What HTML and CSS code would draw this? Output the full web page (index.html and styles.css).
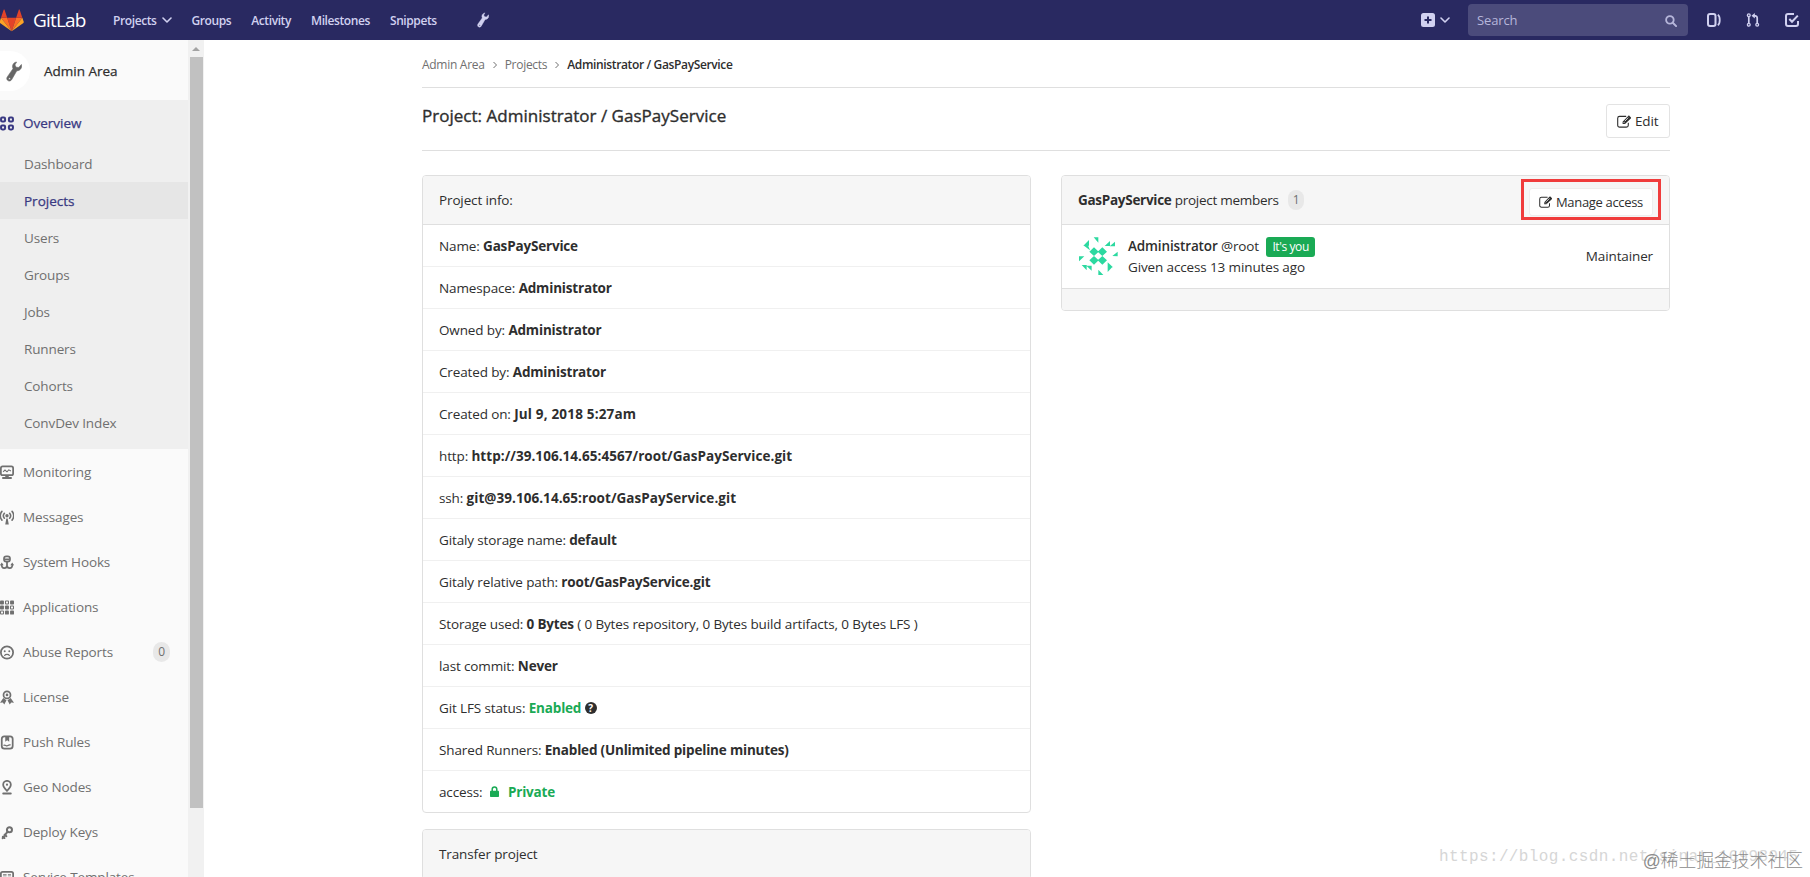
FILE: index.html
```html
<!DOCTYPE html>
<html lang="en">
<head>
    <meta charset="UTF-8">
    <meta name="viewport" content="width=device-width, initial-scale=1.0">
    <title>Administrator / GasPayService · Projects · GitLab</title>
    <link rel="stylesheet" href="styles.css">
</head>
<body>
    <!-- Icon sprite -->
    <svg class="sprite">
        <symbol id="chevron" viewBox="0 0 10 10"><path d="M1 3l4 4 4-4" fill="none" stroke="currentColor" stroke-width="1.6" stroke-linecap="round" stroke-linejoin="round"/></symbol>
        <symbol id="angle" viewBox="0 0 6 8"><path d="M1.5 1l3 3-3 3" fill="none" stroke="currentColor" stroke-width="1"/></symbol>
        <symbol id="wrench" viewBox="0 0 16 20"><path d="M10.6.5 8.900 3.400l1.300 2.400 2.600.1L15.400 3c.9 3.400-1.200 6.400-4.600 6.300L5.600 18.200c-.9 1.500-2.600 1.600-3.700.9-1.200-.8-1.500-2.400-.6-3.700L7 7.200C5.600 4.200 7.200 1 10.600.5zM3.500 16.200a.9.9 0 1 0 .1 1.800.9.9 0 0 0-.1-1.800z" fill="currentColor" fill-rule="evenodd" stroke="currentColor" stroke-width=".6"/></symbol>
        <symbol id="edit" viewBox="0 0 15 13"><path d="M11.300 7.800v2.400c0 1.100-.8 1.900-1.900 1.900H2.600C1.500 12.100.7 11.300.7 10.200V3.300c0-1.100.8-1.900 1.900-1.900h6.600" fill="none" stroke="currentColor" stroke-width="1.100"/><path d="M5.600 9V6.700l5.600-5.800c.4-.4.9-.4 1.300 0l1.300 1.300c.4.4.4.9 0 1.300L8 9z" fill="currentColor"/><path d="M6.500 7l1.100 1.100M7.800 6.200l3.400-3.500" stroke="#fff" stroke-width=".8"/></symbol>
        <symbol id="overview" viewBox="0 0 16 16"><g fill="none" stroke="currentColor" stroke-width="2.300"><rect x="1.200" y="1.200" width="4.600" height="4.600" rx="1.300"/><rect x="10.200" y="1.200" width="4.600" height="4.600" rx="1.300"/><rect x="1.200" y="10.200" width="4.600" height="4.600" rx="1.300"/><rect x="10.200" y="10.200" width="4.600" height="4.600" rx="1.300"/></g></symbol>
        <symbol id="monitor" viewBox="0 0 16 16"><rect x="1" y="1" width="14" height="10" rx="2" fill="none" stroke="currentColor" stroke-width="2"/><path d="M3.500 7.200l2.200-2 2.300 2 2-2.200 2.500 1.200" fill="none" stroke="currentColor" stroke-width="1.200"/><path d="M6 11h4v2h2.500a1 1 0 0 1 0 2.500h-9a1 1 0 0 1 0-2.500H6z" fill="currentColor"/></symbol>
        <symbol id="messages" viewBox="0 0 16 16"><circle cx="8" cy="6" r="1.900" fill="currentColor"/><path d="M7.200 9h1.600l1.200 7H6z" fill="currentColor"/><path d="M5 3.200a4.300 4.300 0 0 0 0 5.600M11 3.200a4.300 4.300 0 0 1 0 5.600M2.200 1a7.500 7.500 0 0 0 0 10M13.800 1a7.500 7.500 0 0 1 0 10" fill="none" stroke="currentColor" stroke-width="1.800" stroke-linecap="round"/></symbol>
        <symbol id="hook" viewBox="0 0 16 16"><rect x="4.600" y="1" width="6.800" height="6" rx="2.500" fill="none" stroke="currentColor" stroke-width="2"/><path d="M5 4.500h6M8 7v7.500M1.800 10c0 3.200 1.300 4.500 3 4.500S8 13.400 8 11.500c0 1.900 1.500 3 3.200 3s3-1.300 3-4.500" fill="none" stroke="currentColor" stroke-width="2"/><path d="M0 11l2-3 2.200 3zM11.800 11L14 8l2 3z" fill="currentColor"/></symbol>
        <symbol id="apps" viewBox="0 0 16 16"><g fill="currentColor"><rect x="0" y="0" width="4.500" height="4.500" rx="1"/><rect x="11.500" y="0" width="4.500" height="4.500" rx="1"/><rect x="0" y="5.700" width="4.500" height="4.500" rx="1"/><rect x="5.700" y="5.700" width="4.500" height="4.500" rx="1"/><rect x="5.700" y="11.500" width="4.500" height="4.500" rx="1"/><rect x="11.500" y="11.500" width="4.500" height="4.500" rx="1"/></g><g fill="none" stroke="currentColor" stroke-width="1.200"><rect x="6.300" y=".6" width="3.400" height="3.400" rx=".5"/><rect x="12" y="6.300" width="3.400" height="3.400" rx=".5"/><rect x=".6" y="12" width="3.400" height="3.400" rx=".5"/></g></symbol>
        <symbol id="abuse" viewBox="0 0 16 16"><circle cx="8" cy="8" r="7" fill="none" stroke="currentColor" stroke-width="2"/><circle cx="5.400" cy="6.500" r="1.100" fill="currentColor"/><circle cx="10.600" cy="6.500" r="1.100" fill="currentColor"/><path d="M5.300 11.300c.8-1.700 4.600-1.700 5.400 0" fill="none" stroke="currentColor" stroke-width="1.400" stroke-linecap="round"/></symbol>
        <symbol id="license" viewBox="0 0 16 16"><circle cx="8" cy="5" r="4" fill="none" stroke="currentColor" stroke-width="2"/><circle cx="8" cy="5" r="1.500" fill="currentColor"/><path d="M3.800 8.500l3.600 2.500-2.500 5-1.700-2.300-3.200.3zM12.200 8.500L8.600 11l2.500 5 1.700-2.300 3.200.3z" fill="currentColor"/></symbol>
        <symbol id="push" viewBox="0 0 16 16"><rect x="2" y="1" width="12.500" height="14" rx="3" fill="none" stroke="currentColor" stroke-width="2"/><path d="M6 1v6l2.200-1.700L10.500 7V1z" fill="currentColor"/><path d="M4 11.500c2-2 3 1.500 5 0s2-1 3-.5" fill="none" stroke="currentColor" stroke-width="1.500"/></symbol>
        <symbol id="geo" viewBox="0 0 16 18"><path d="M8 13C4.500 9.500 3.400 8 3.400 5.600a4.600 4.600 0 0 1 9.200 0C12.600 8 11.500 9.500 8 13z" fill="none" stroke="currentColor" stroke-width="2.100"/><circle cx="8" cy="5.600" r="1.300" fill="currentColor"/><path d="M3.500 16.300h9" stroke="currentColor" stroke-width="2.400" stroke-linecap="round"/></symbol>
        <symbol id="key" viewBox="0 0 16 16"><circle cx="10.800" cy="4.800" r="2.900" fill="none" stroke="currentColor" stroke-width="2.300"/><path d="M8.700 7L3 14.500M5.300 10.500l2 1.700M3.300 12.800l1.800 1.500" fill="none" stroke="currentColor" stroke-width="2.300" stroke-linecap="round"/></symbol>
        <symbol id="template" viewBox="0 0 16 16"><rect x="1" y="1.500" width="14" height="13" rx="2" fill="none" stroke="currentColor" stroke-width="2"/><path d="M3.500 5h4M3.500 8h4M9 5h3.500M9 8h3.500" stroke="currentColor" stroke-width="1.600"/></symbol>
    </svg>

    <header class="navbar">
        <a class="brand">
            <svg class="tanuki" viewBox="0 0 36 34">
                <path d="M17.500 33L24.200 13H10.800z" fill="#e24329"/>
                <path d="M17.500 33L10.800 13H1.500z" fill="#fc6d26"/>
                <path d="M1.500 13L-.6 19c-.2.600 0 1.200.5 1.600L17.500 33z" fill="#fca326"/>
                <path d="M1.500 13h9.300L6.800 1c-.2-.6-1.100-.6-1.300 0z" fill="#e24329"/>
                <path d="M17.500 33L24.200 13h9.300z" fill="#fc6d26"/>
                <path d="M33.500 13l2.100 6c.2.600 0 1.200-.5 1.600L17.500 33z" fill="#fca326"/>
                <path d="M33.500 13h-9.300l4-12c.2-.6 1.100-.6 1.300 0z" fill="#e24329"/>
            </svg>
            <span class="brand-name">GitLab</span>
        </a>
        <nav class="nav-links">
            <a>Projects <svg class="chevron"><use href="#chevron"/></svg></a>
            <a>Groups</a>
            <a>Activity</a>
            <a>Milestones</a>
            <a>Snippets</a>
            <a class="nav-wrench"><svg><use href="#wrench"/></svg></a>
        </nav>
        <div class="nav-right">
            <a class="new-item">
                <svg class="icon-plus" viewBox="0 0 14 14"><rect width="14" height="14" rx="2.500" fill="currentColor"/><path d="M7 3.500v7M3.500 7h7" stroke="#292961" stroke-width="2"/></svg>
                <svg class="chevron"><use href="#chevron"/></svg>
            </a>
            <div class="search">
                <span>Search</span>
                <svg viewBox="0 0 12 12"><circle cx="4.900" cy="4.900" r="3.800" fill="none" stroke="currentColor" stroke-width="1.800"/><path d="M7.800 7.800l3.300 3.300" stroke="currentColor" stroke-width="2" stroke-linecap="round"/></svg>
            </div>
            <svg class="nav-icon" viewBox="0 0 14 14"><rect x="1" y="1" width="7.500" height="12" rx="2" fill="none" stroke="currentColor" stroke-width="2"/><path d="M10.800 1.800c2.600 1.500 2.600 8.900 0 10.400" fill="none" stroke="currentColor" stroke-width="1.800"/></svg>
            <svg class="nav-icon" viewBox="0 0 14 14"><g fill="none" stroke="currentColor" stroke-width="1.300"><circle cx="2.800" cy="2.200" r="1.400"/><circle cx="2.800" cy="11.800" r="1.400"/><circle cx="11.200" cy="11.800" r="1.400"/></g><path d="M2.800 3.600v6.800M11.200 10.400V5c0-1.700-1-2.300-3.300-2.300" fill="none" stroke="currentColor" stroke-width="1.700"/><path d="M5.500 2.700L8.800 0v5.400z" fill="currentColor"/></svg>
            <svg class="nav-icon" viewBox="0 0 14 14"><path d="M9 1H3a2 2 0 0 0-2 2v8a2 2 0 0 0 2 2h8a2 2 0 0 0 2-2V8" fill="none" stroke="currentColor" stroke-width="2"/><path d="M4.300 6l2.700 2.800L12.800 2.600" fill="none" stroke="currentColor" stroke-width="2"/></svg>
        </div>
    </header>

    <div class="page">
        <aside class="sidebar">
            <div class="sidebar-menu">
                <div class="context-header">
                    <span class="context-avatar"><svg><use href="#wrench"/></svg></span>
                    <span>Admin Area</span>
                </div>
                <div class="section-open">
                    <a class="menu-item active"><svg><use href="#overview"/></svg>Overview</a>
                    <a class="sub-item">Dashboard</a>
                    <a class="sub-item active">Projects</a>
                    <a class="sub-item">Users</a>
                    <a class="sub-item">Groups</a>
                    <a class="sub-item">Jobs</a>
                    <a class="sub-item">Runners</a>
                    <a class="sub-item">Cohorts</a>
                    <a class="sub-item">ConvDev Index</a>
                </div>
                <a class="menu-item"><svg><use href="#monitor"/></svg>Monitoring</a>
                <a class="menu-item"><svg><use href="#messages"/></svg>Messages</a>
                <a class="menu-item"><svg><use href="#hook"/></svg>System Hooks</a>
                <a class="menu-item"><svg><use href="#apps"/></svg>Applications</a>
                <a class="menu-item"><svg><use href="#abuse"/></svg>Abuse Reports<span class="badge">0</span></a>
                <a class="menu-item"><svg><use href="#license"/></svg>License</a>
                <a class="menu-item"><svg><use href="#push"/></svg>Push Rules</a>
                <a class="menu-item"><svg><use href="#geo"/></svg>Geo Nodes</a>
                <a class="menu-item"><svg><use href="#key"/></svg>Deploy Keys</a>
                <a class="menu-item"><svg><use href="#template"/></svg>Service Templates</a>
            </div>
            <div class="scrollbar">
                <span class="scroll-arrow"></span>
                <span class="scroll-thumb"></span>
            </div>
        </aside>

        <main class="content">
            <div class="breadcrumbs">
                <a>Admin Area</a>
                <svg><use href="#angle"/></svg>
                <a>Projects</a>
                <svg><use href="#angle"/></svg>
                <strong>Administrator / GasPayService</strong>
            </div>
            <div class="page-title">
                <h3>Project: Administrator / GasPayService</h3>
                <a class="btn"><svg><use href="#edit"/></svg>Edit</a>
            </div>

            <div class="columns">
                <div class="column">
                    <div class="panel">
                        <div class="panel-heading">Project info:</div>
                        <ul class="info-list">
                            <li>Name: <strong>GasPayService</strong></li>
                            <li>Namespace: <strong>Administrator</strong></li>
                            <li>Owned by: <strong>Administrator</strong></li>
                            <li>Created by: <strong>Administrator</strong></li>
                            <li>Created on: <strong class="date">Jul 9, 2018 5:27am</strong></li>
                            <li>http: <strong class="url">http://39.106.14.65:4567/root/GasPayService.git</strong></li>
                            <li>ssh: <strong class="url">git@39.106.14.65:root/GasPayService.git</strong></li>
                            <li>Gitaly storage name: <strong>default</strong></li>
                            <li>Gitaly relative path: <strong>root/GasPayService.git</strong></li>
                            <li>Storage used: <strong>0 Bytes</strong> ( 0 Bytes repository, 0 Bytes build artifacts, 0 Bytes LFS )</li>
                            <li>last commit: <strong>Never</strong></li>
                            <li>Git LFS status: <strong class="green">Enabled</strong> <span class="help">?</span></li>
                            <li>Shared Runners: <strong>Enabled (Unlimited pipeline minutes)</strong></li>
                            <li>access: <svg class="lock" viewBox="0 0 9 11"><path d="M2.200 5V3.300a2.300 2.300 0 0 1 4.600 0V5" fill="none" stroke="currentColor" stroke-width="1.500"/><rect y="4.800" width="9" height="6.200" rx=".8" fill="currentColor"/></svg><strong class="green">Private</strong></li>
                        </ul>
                    </div>
                    <div class="panel">
                        <div class="panel-heading">Transfer project</div>
                    </div>
                </div>

                <div class="column">
                    <div class="panel">
                        <div class="panel-heading members-heading">
                            <strong>GasPayService</strong>&nbsp;project members
                            <span class="badge">1</span>
                            <a class="btn btn-sm"><svg><use href="#edit"/></svg>Manage access<span class="highlight"></span></a>
                        </div>
                        <div class="member">
                            <svg class="avatar" viewBox="23 20 120 120" fill="#2cd9a0">
                                <path d="M71 54l14 13-14 13-14-13zM96 54l14 13-14 13-14-13zM71 80l14 13-14 13-14-13zM96 80l14 13-14 13-14-13z"/>
                                <path d="M70 24h14v16zM56 32v17H39zM39 48h14l6 15zM119 35v15h-16zM134 37v14h-16zM142 67v14l-16-1zM26 81h16L26 96zM84 121l15 16H84zM34 107h15v16zM48 109h16v15zM112 99l16 15h-16zM112 113h14l-14 15z"/>
                            </svg>
                            <div class="member-info">
                                <div><b>Administrator</b> @root <span class="label">It's you</span></div>
                                <div>Given access 13 minutes ago</div>
                            </div>
                            <span class="role">Maintainer</span>
                        </div>
                        <div class="panel-footer"></div>
                    </div>
                </div>
            </div>
        </main>
    </div>

    <div class="watermark-url">https://blog.csdn.net/sinat_16998945</div>
    <div class="watermark">@稀土掘金技术社区</div>
</body>
</html>
```
FILE: styles.css
```css
* {
    box-sizing: border-box;
}
body {
    margin: 0;
    height: 877px;
    overflow: hidden;
    position: relative;
    background: #fff;
    color: #2e2e2e;
    font-family: "Open Sans", "Noto Sans", sans-serif;
    font-size: 13.5px;
    line-height: 21px;
    letter-spacing: -0.13px;
}
svg {
    display: block;
    flex: none;
}
.sprite {
    display: none;
}

/* Top bar */
.navbar {
    display: flex;
    align-items: center;
    height: 40px;
    background: #292961;
    color: #d1d1f0;
}
.brand {
    display: flex;
    align-items: center;
    width: 113px;
    color: #fff;
}
.tanuki {
    width: 24px;
    height: 23px;
    margin-right: 9px;
}
.brand-name {
    font-size: 19px;
    letter-spacing: -0.8px;
}
.nav-links {
    display: flex;
    align-items: center;
    gap: 20px;
    font-size: 12px;
    font-weight: 600;
    letter-spacing: -0.4px;
}
.nav-links a {
    display: flex;
    align-items: center;
}
.chevron {
    width: 10px;
    height: 10px;
    margin-left: 5px;
}
.nav-links .nav-wrench {
    margin-left: 20px;
}
.nav-wrench svg {
    width: 12px;
    height: 16px;
}
.nav-right {
    display: flex;
    align-items: center;
    margin-left: auto;
    padding-right: 11px;
}
.new-item {
    display: flex;
    align-items: center;
    margin-right: 18px;
}
.icon-plus {
    width: 14px;
    height: 14px;
}
.search {
    display: flex;
    align-items: center;
    justify-content: space-between;
    width: 220px;
    height: 32px;
    margin-right: 19px;
    padding: 1px 11px 0 9px;
    border-radius: 4px;
    background: #4b4b7b;
    color: #b6b6da;
    font-size: 13px;
}
.search svg {
    width: 12px;
    height: 12px;
}
.nav-icon {
    width: 14px;
    height: 14px;
}
.nav-icon + .nav-icon {
    margin-left: 25px;
}

/* Sidebar */
.page {
    display: flex;
}
.sidebar {
    display: flex;
    width: 204px;
    height: 837px;
    overflow: hidden;
    background: #fafafa;
    color: #707070;
}
.sidebar-menu {
    width: 188px;
}
.context-header {
    display: flex;
    align-items: center;
    height: 60px;
    padding-top: 2px;
    color: #2e2e2e;
    letter-spacing: 0;
    -webkit-text-stroke: 0.25px;
}
.context-avatar {
    display: flex;
    align-items: center;
    width: 30px;
    height: 40px;
    margin-right: 14px;
    padding-left: 6px;
    border-radius: 0 20px 20px 0;
    background: #fff;
    color: #666;
}
.context-avatar svg {
    width: 16px;
    height: 21px;
}
.section-open {
    height: 349px;
    background: #efefef;
}
.menu-item {
    display: flex;
    align-items: center;
    height: 45px;
    padding-top: 1px;
}
.menu-item svg {
    width: 14px;
    height: 15px;
    margin-right: 9px;
}
.menu-item.active,
.sub-item.active {
    color: #393982;
    letter-spacing: 0;
    -webkit-text-stroke: 0.25px;
}
.sub-item {
    display: flex;
    align-items: center;
    height: 37px;
    padding: 2px 0 0 24px;
}
.sub-item.active {
    background: #e6e6e6;
}
.badge {
    padding: 0 5px;
    border-radius: 10px;
    background: #e8e8e8;
    color: #707070;
    font-size: 12px;
    line-height: 20px;
}
.menu-item .badge {
    margin-left: auto;
    margin-right: 18px;
}
.scrollbar {
    display: flex;
    flex-direction: column;
    align-items: center;
    width: 16px;
    background: #f1f1f1;
}
.scroll-arrow {
    margin: 7px 0 6px;
    border: 4px solid transparent;
    border-top: 0;
    border-bottom-color: #a3a3a3;
}
.scroll-thumb {
    width: 13px;
    height: 751px;
    background: #c1c1c1;
}

/* Main content */
.content {
    width: 1248px;
    margin-left: 218px;
}
.breadcrumbs {
    display: flex;
    align-items: center;
    height: 48px;
    padding-top: 2px;
    border-bottom: 1px solid #dfdfdf;
    color: #707070;
    font-size: 12px;
    letter-spacing: -0.28px;
}
.breadcrumbs svg {
    width: 6px;
    height: 8px;
    margin: 0 7px;
}
.breadcrumbs strong {
    color: #2e2e2e;
    font-weight: 600;
    letter-spacing: -0.36px;
}
.page-title {
    display: flex;
    justify-content: space-between;
    height: 63px;
    padding-top: 16px;
    border-bottom: 1px solid #dfdfdf;
}
h3 {
    margin: 0;
    font-size: 17px;
    font-weight: 400;
    line-height: 24px;
    letter-spacing: 0.02px;
    -webkit-text-stroke: 0.35px;
}
.btn {
    display: flex;
    align-items: center;
    width: 64px;
    height: 34px;
    padding: 0 0 0 10px;
    border: 1px solid #e3e3e3;
    border-radius: 3px;
    background: #fff;
    white-space: nowrap;
}
.btn svg {
    width: 15px;
    height: 13px;
    margin-right: 3px;
}
.columns {
    display: grid;
    grid-template-columns: 609px 609px;
    gap: 30px;
    padding-top: 24px;
}
.panel {
    margin-bottom: 16px;
    border: 1px solid #dfdfdf;
    border-radius: 4px;
    overflow: hidden;
}
.panel-heading {
    height: 49px;
    padding: 14px 16px 0;
    border-bottom: 1px solid #dfdfdf;
    background: #f6f6f6;
}
.info-list {
    margin: 0;
    padding: 0;
    list-style: none;
}
.info-list li {
    height: 42px;
    padding: 11px 16px 0;
    border-bottom: 1px solid #f0f0f0;
}
.info-list li:last-child {
    height: 41px;
    border-bottom: 0;
}
.info-list strong {
    letter-spacing: -0.18px;
}
.info-list .url {
    letter-spacing: 0.05px;
}
.info-list .date {
    letter-spacing: 0.18px;
}
.green {
    color: #1aaa55;
}
.help {
    display: inline-block;
    width: 12px;
    height: 12px;
    border-radius: 50%;
    background: #2e2e2e;
    color: #fff;
    font-size: 10px;
    font-weight: 700;
    line-height: 12px;
    text-align: center;
    vertical-align: 1px;
}
.lock {
    display: inline-block;
    width: 9px;
    height: 11px;
    margin: 0 9px 0 4px;
    color: #1aaa55;
}

/* Members */
.members-heading {
    display: flex;
    align-items: center;
    padding-top: 0;
    letter-spacing: -0.28px;
}
.members-heading .badge {
    margin-left: 9px;
}
.btn-sm {
    position: relative;
    width: 124px;
    height: 28px;
    margin: 4px 0 0 auto;
    padding: 0 0 0 9px;
    border-color: #eee;
    font-size: 13px;
    letter-spacing: -0.33px;
}
.btn-sm svg {
    width: 14px;
    height: 12px;
}
.highlight {
    position: absolute;
    top: -10px;
    left: -9px;
    width: 140px;
    height: 41px;
    border: 3px solid #f03c3c;
}
.member {
    display: flex;
    align-items: center;
    height: 63px;
    padding: 0 16px;
}
.avatar {
    width: 40px;
    height: 40px;
    margin: -2px 10px 0 0;
}
.member-info b {
    font-weight: 600;
}
.label {
    display: inline-block;
    margin-left: 4px;
    padding: 0 6px;
    border-radius: 3px;
    background: #1aaa55;
    color: #fff;
    font-size: 12px;
    line-height: 20px;
    letter-spacing: -0.4px;
}
.role {
    margin-left: auto;
}
.panel-footer {
    height: 22px;
    border-top: 1px solid #dfdfdf;
    background: #f6f6f6;
}

/* Watermarks lie over the page corner */
.watermark-url {
    position: absolute;
    left: 1439px;
    top: 847px;
    color: #d6d6d6;
    font: 16px/21px "Liberation Mono", monospace;
    letter-spacing: 0.38px;
    white-space: nowrap;
}
.watermark {
    position: absolute;
    right: 7px;
    top: 849px;
    color: #8c8c8c;
    font: 300 17.800px/24px "Liberation Sans", "Noto Sans CJK SC", sans-serif;
    letter-spacing: 0;
    white-space: nowrap;
}
```
